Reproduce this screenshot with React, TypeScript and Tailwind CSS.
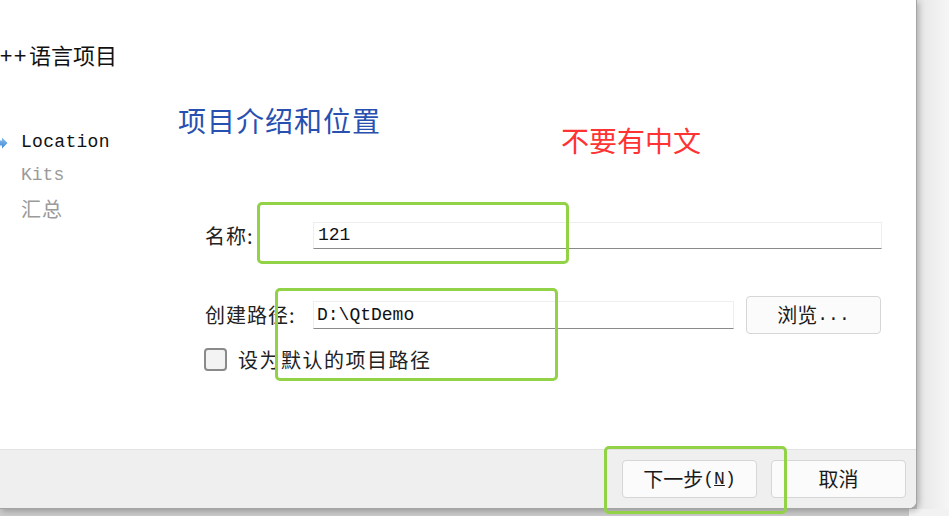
import React from "react";

const cjk = { fontFamily: '"Noto Sans CJK SC", "Noto Sans", sans-serif' };
const mono = { fontFamily: '"Liberation Mono", "Noto Sans CJK SC", monospace' };

function Arrow() {
  return (
    <svg width="10" height="12" viewBox="0 0 10 12" className="ml-[-2px]">
      <defs>
        <linearGradient id="ag" x1="0" y1="0" x2="0" y2="1">
          <stop offset="0" stopColor="#8cc0ef" />
          <stop offset="1" stopColor="#3f86d6" />
        </linearGradient>
      </defs>
      <path d="M0 3.5 H4 V0.5 L9.5 6 L4 11.5 V8.5 H0 Z" fill="url(#ag)" />
    </svg>
  );
}

function Btn({ children, className = "" }: { children: React.ReactNode; className?: string }) {
  return (
    <div
      className={"flex items-center justify-center h-[38px] rounded-[4px] border border-[#d6d6d6] bg-[#fbfbfb] text-[20px] text-[#1a1a1a] " + className}
      style={cjk}
    >
      {children}
    </div>
  );
}

export default function App() {
  return (
    <div className="relative w-[949px] h-[516px] overflow-hidden bg-[#cbcbcb]">
      <div className="flex h-[509px]">
        <div className="flex flex-col w-[917px] h-[509px] bg-white border-r border-b border-[#a4a4a4] rounded-br-[8px] overflow-hidden shadow-[2px_2px_6px_rgba(0,0,0,0.25)] z-10">
          <div className="flex-1 relative">
            <div className="pt-[42px]">
              <div className="flex items-center text-[22px] leading-[24px] text-[#111]" style={cjk}>
                <span className="w-[14px]">+</span>
                <span className="w-[15px]">+</span>
                <span>语言项目</span>
              </div>
            </div>
            <div className="flex">
              <div className="w-[178px] pt-[60px]">
                <div className="flex items-center h-[33px] gap-[13px]">
                  <Arrow />
                  <span className="text-[18px] tracking-[0.3px] text-[#111]" style={mono}>Location</span>
                </div>
                <div className="flex items-center h-[33px] pl-[21px] text-[18px] text-[#9a9a9a]" style={mono}>
                  Kits
                </div>
                <div className="flex items-center h-[33px] pl-[21px] text-[20px] tracking-[1px] text-[#9a9a9a]" style={cjk}>
                  汇总
                </div>
              </div>
              <div className="flex-1 pt-[38px]">
                <div className="text-[28px] leading-[32px] tracking-[1px] text-[#2850b0]" style={cjk}>
                  项目介绍和位置
                </div>
                <div className="ml-[27px] mt-[86px] flex flex-col">
                  <div className="flex items-center h-[27px]">
                    <div className="w-[108px] text-[20px] tracking-[1px] text-[#222]" style={cjk}>名称:</div>
                    <div className="w-[569px] h-[27px] flex items-center pl-[4px] bg-white border border-[#eeeeee] border-b-[#8a8a8a] text-[18px] text-[#111]" style={mono}>
                      121
                    </div>
                  </div>
                  <div className="flex items-center h-[38px] mt-[47px]">
                    <div className="w-[108px] text-[20px] tracking-[1px] text-[#222]" style={cjk}>创建路径:</div>
                    <div className="w-[421px] h-[28px] flex items-center pl-[3px] bg-white border border-[#eeeeee] border-b-[#8a8a8a] text-[18px] text-[#111]" style={mono}>
                      D:\QtDemo
                    </div>
                    <Btn className="ml-[12px] w-[135px]">
                      浏览<span style={mono} className="text-[18px]">...</span>
                    </Btn>
                  </div>
                  <div className="flex items-center h-[23px] mt-[14px] ml-[-1px]">
                    <div className="w-[23px] h-[23px] rounded-[4px] border-2 border-[#8a8a8a] bg-[#f3f3f3]" />
                    <div className="ml-[11px] text-[20px] tracking-[1.5px] text-[#222]" style={cjk}>设为默认的项目路径</div>
                  </div>
                </div>
              </div>
            </div>
            <div className="absolute left-[561px] top-[124px] text-[28px] leading-[32px] text-[#ff3333]" style={cjk}>
              不要有中文
            </div>
          </div>
          <div className="h-[59px] shrink-0 bg-[#efefef] border-t border-[#e2e2e2] flex items-center justify-end gap-[14px] pr-[10px]">
            <Btn className="w-[135px]">
              下一步<span style={mono} className="text-[18px]">(<span className="underline">N</span>)</span>
            </Btn>
            <Btn className="w-[135px]">取消</Btn>
          </div>
        </div>
        <div className="flex-1 bg-gradient-to-r from-[#e6e6e6] to-[#f6f6f6]" />
      </div>
      <div className="absolute right-0 bottom-0 w-[40px] h-[7px] bg-[#f2f2f2]" />
      <div className="absolute left-[257px] top-[202px] w-[312px] h-[62px] border-[3px] border-[#92d246] rounded-[5px] z-20" />
      <div className="absolute left-[275px] top-[288px] w-[283px] h-[93px] border-[3px] border-[#92d246] rounded-[5px] z-20" />
      <div className="absolute left-[604px] top-[446px] w-[183px] h-[68px] border-[3px] border-[#92d246] rounded-[5px] z-20" />
    </div>
  );
}
